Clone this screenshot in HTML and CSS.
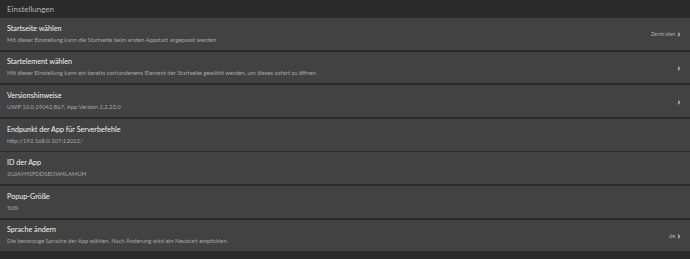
FILE: index.html
```html
<!DOCTYPE html>
<html lang="de">
<head>
  <meta charset="UTF-8" />
  <title>Einstellungen</title>
  <link rel="stylesheet" href="styles.css">
</head>
<body>
  <div class="page">
    <div class="page-title">Einstellungen</div>

    <div class="settings">
      <div class="setting">
        <div class="setting-text">
          <div class="setting-title">Startseite wählen</div>
          <div class="setting-desc">Mit dieser Einstellung kann die Startseite beim ersten Appstart angepasst werden</div>
        </div>
        <div class="setting-value">Zentralen <span class="chev">›</span></div>
      </div>

      <div class="setting">
        <div class="setting-text">
          <div class="setting-title">Startelement wählen</div>
          <div class="setting-desc">Mit dieser Einstellung kann ein bereits vorhandenens Element der Startseite gewählt werden, um dieses sofort zu öffnen</div>
        </div>
        <div class="setting-value"><span class="chev">›</span></div>
      </div>

      <div class="setting">
        <div class="setting-text">
          <div class="setting-title">Versionshinweise</div>
          <div class="setting-desc">UWP 10.0.19042.867, App Version 2.2.23.0</div>
        </div>
        <div class="setting-value"><span class="chev">›</span></div>
      </div>

      <div class="setting">
        <div class="setting-text">
          <div class="setting-title">Endpunkt der App für Serverbefehle</div>
          <div class="setting-desc">http://192.168.0.107:12012/</div>
        </div>
      </div>

      <div class="setting">
        <div class="setting-text">
          <div class="setting-title">ID der App</div>
          <div class="setting-desc">2UJAYHSFDDSEOW4LAMUH</div>
        </div>
      </div>

      <div class="setting">
        <div class="setting-text">
          <div class="setting-title">Popup-Größe</div>
          <div class="setting-desc">50%</div>
        </div>
      </div>

      <div class="setting">
        <div class="setting-text">
          <div class="setting-title">Sprache ändern</div>
          <div class="setting-desc">Die bevorzuge Sprache der App wählen. Nach Änderung wird ein Neustart empfohlen.</div>
        </div>
        <div class="setting-value">de <span class="chev">›</span></div>
      </div>
    </div>
  </div>
</body>
</html>
```

FILE: styles.css
```css
body {
  margin: 0;
  background: #2b2b2b;
  color: #f0f0f0;
  font-family: Lato, "Noto Sans", sans-serif;
}

.page {
  width: 690px;
  height: 259px;
  overflow: hidden;
}

.page-title {
  height: 18px;
  line-height: 19px;
  padding-left: 7px;
  font-size: 8px;
  color: #b4b4b4;
}

.settings {
  display: flex;
  flex-direction: column;
  gap: 1.8px;
}

.setting {
  height: 31.8px;
  background: #424242;
  display: flex;
  align-items: center;
  padding: 0 10px 0 7px;
}

.setting-text {
  flex: 1;
}

.setting-title {
  font-size: 7.2px;
  line-height: 12px;
  color: #f2f2f2;
}

.setting-desc {
  font-size: 5.9px;
  line-height: 10px;
  color: #a8a8a8;
}

.setting-value {
  font-size: 5.9px;
  color: #a8a8a8;
  display: flex;
  align-items: center;
  gap: 2px;
}

.chev {
  font-size: 9px;
  color: #e6e6e6;
  font-weight: bold;
}
```
